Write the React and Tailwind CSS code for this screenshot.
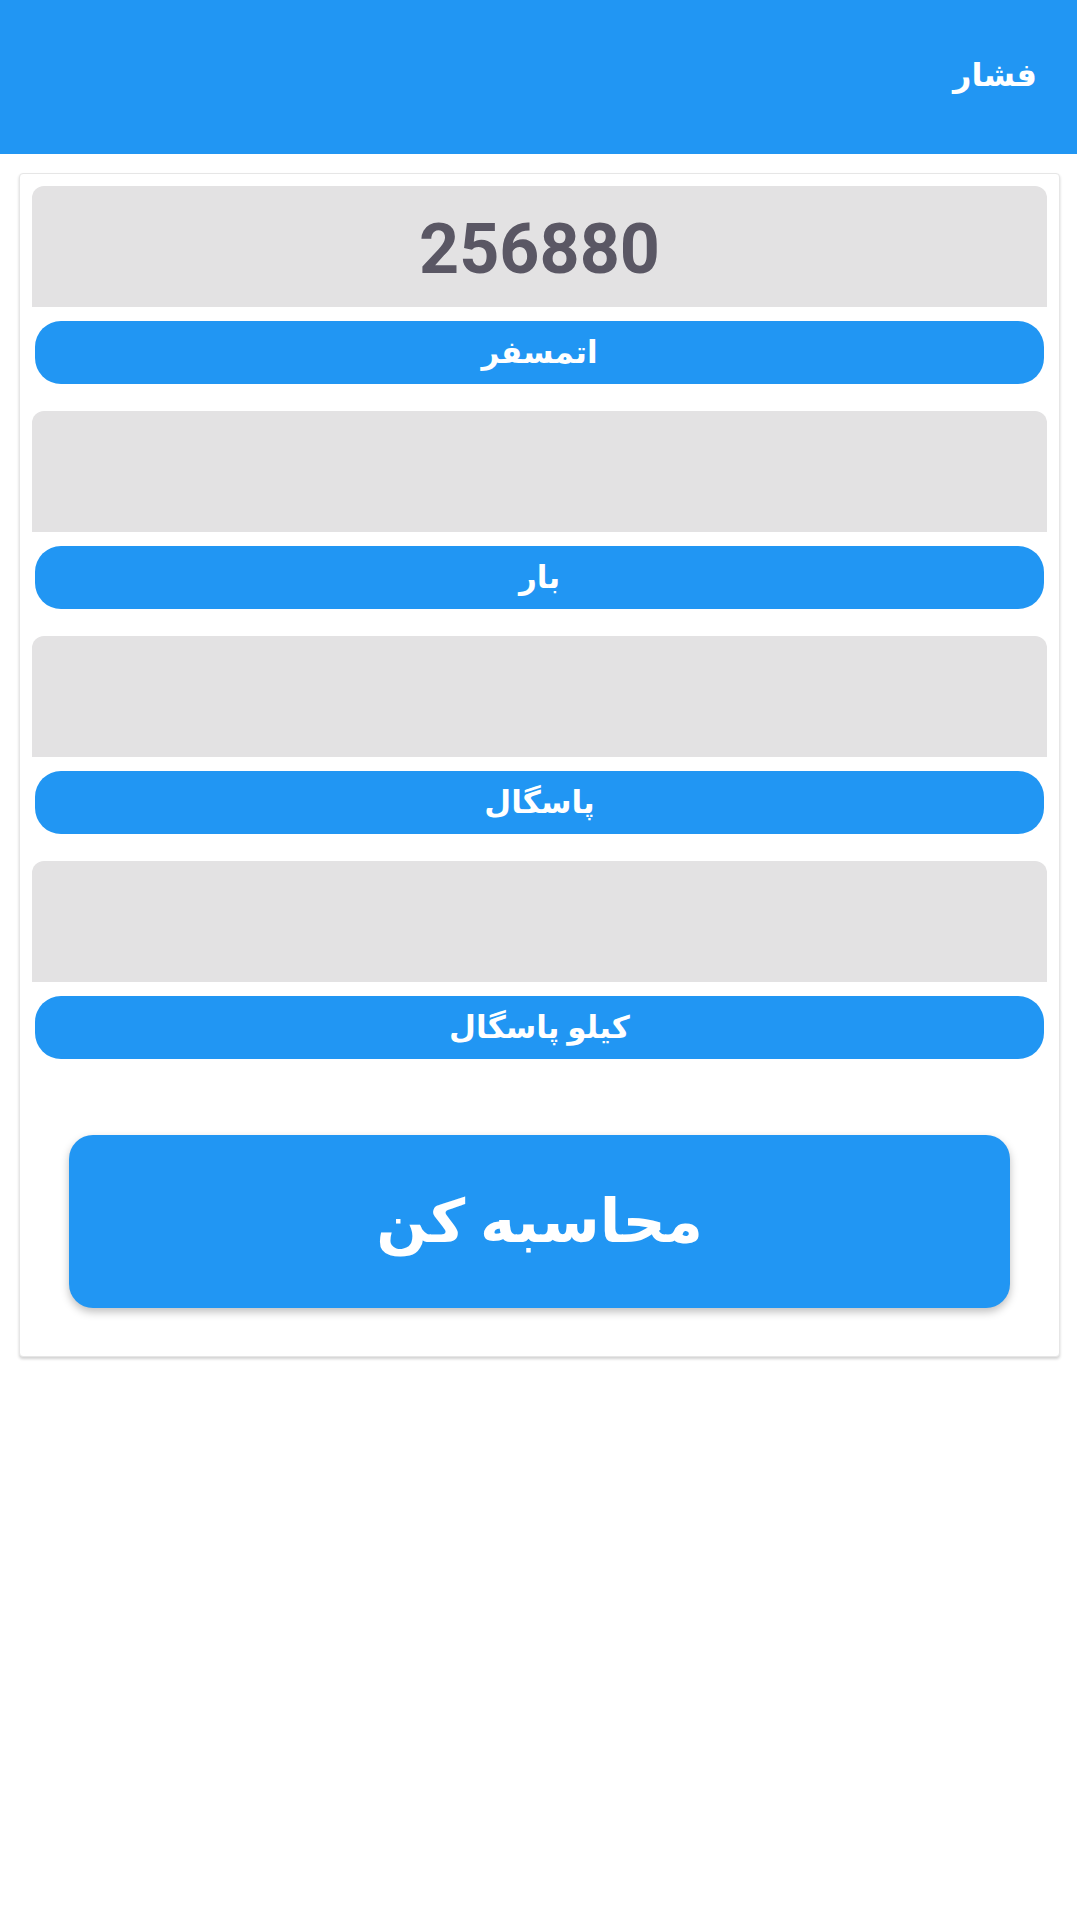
const UNITS = ['اتمسفر', 'بار', 'پاسگال', 'کیلو پاسگال']

const VALUES = { 'اتمسفر': '256880' }

const fa = { fontFamily: 'Roboto, "DejaVu Sans", sans-serif' }

function UnitRow({ label, value }) {
  return (
    <div className="flex flex-col">
      {/* value field */}
      <div className="h-[121px] rounded-t-[12px] bg-[#e3e2e3] flex items-center justify-center pt-[5px]">
        <span className="text-[70px] font-bold text-[#5a5764] leading-none" style={fa}>
          {value}
        </span>
      </div>
      {/* unit label */}
      <div className="mt-[14px] mx-[3px] h-[63px] rounded-[26px] bg-[#2196f3] flex items-center justify-center">
        <span dir="rtl" className="text-[31px] font-bold text-white leading-none" style={fa}>
          {label}
        </span>
      </div>
    </div>
  )
}

export default function App() {
  return (
    <div className="min-h-[1915px] bg-white" style={fa}>
      <header className="h-[154px] bg-[#2196f3] flex items-center justify-end pr-[40px] pb-[4px]">
        <h1 dir="rtl" className="text-[32px] font-bold text-white leading-none">فشار</h1>
      </header>

      <div className="pt-[19px] pl-[19px] pr-[17px]">
        <div className="border border-[#e6e6e6] rounded-[4px] bg-white shadow-[0_2px_3px_rgba(0,0,0,0.18)] px-3 pt-3 pb-[48px]">
          <div className="flex flex-col gap-[27px]">
            {UNITS.map(u => (
              <UnitRow key={u} label={u} value={VALUES[u] || ''} />
            ))}
          </div>

          <div className="mt-[76px] mx-[37px]">
            <button className="w-full h-[173px] rounded-[24px] bg-[#2196f3] shadow-[0_4px_8px_rgba(0,0,0,0.25)] flex items-center justify-center">
              <span dir="rtl" className="text-[60px] font-bold text-white leading-none" style={fa}>
                محاسبه کن
              </span>
            </button>
          </div>
        </div>
      </div>
    </div>
  )
}
